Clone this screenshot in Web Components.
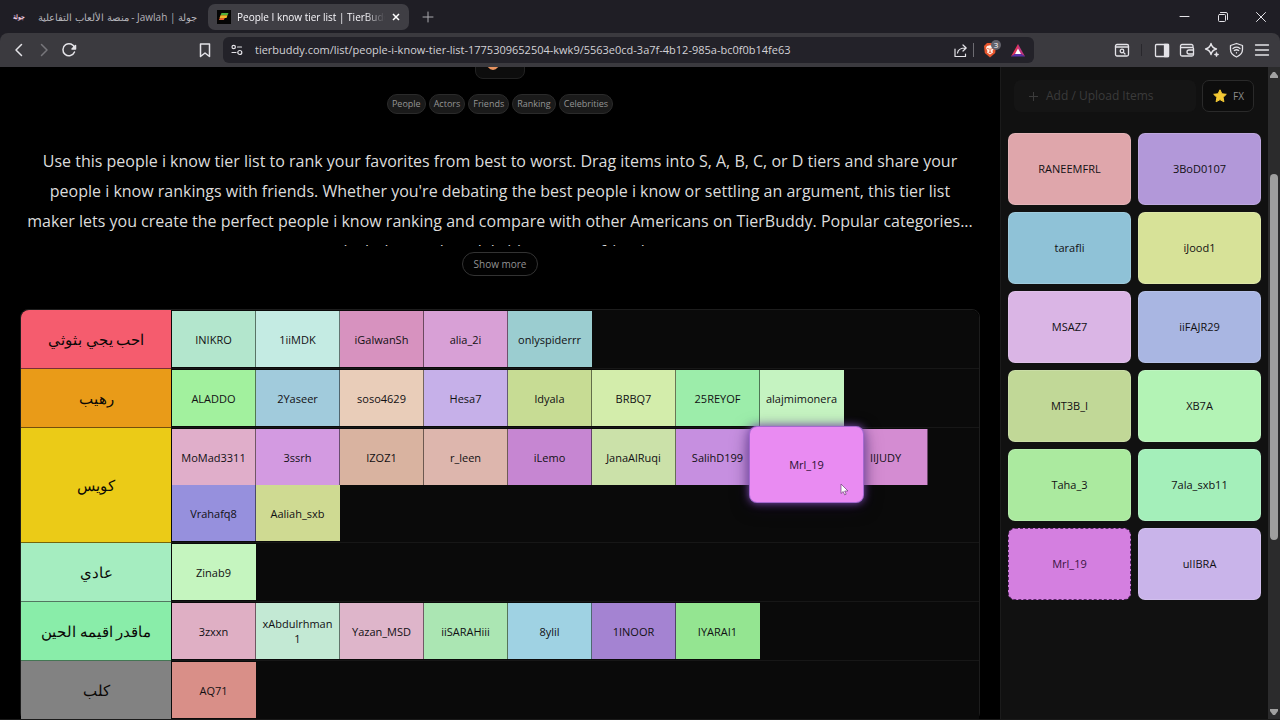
<!DOCTYPE html>
<html lang="en">
<head>
<meta charset="utf-8">
<title>People I know tier list | TierBuddy</title>
<style>
  html, body { margin: 0; height: 100%; background: #000; }
  body { font-family: "Open Sans", "Noto Sans", sans-serif; color: #ddd; overflow: hidden; }
</style>
</head>
<body>
<browser-shell>
  <browser-tab slot="tabs" rtl><span slot="icon" lang="ar">جولة</span>جولة | Jawlah - منصة الألعاب التفاعلية</browser-tab>
  <browser-tab slot="tabs" active>
    <svg slot="icon" width="14" height="14" viewBox="0 0 14 14"><rect width="14" height="14" fill="#050505"/><path d="M4.500 3h7l-1 2.200h-7z" fill="#4fae3c"/><path d="M3.500 5.200h7l-1 2.700h-7z" fill="#f0b429"/><path d="M2.800 7.900h5l-1 2.200h-5z" fill="#e05a2b"/></svg>
    People I know tier list | TierBuddy
  </browser-tab>
  <tier-page slot="page">
    <tag-chip slot="tags">People</tag-chip><tag-chip slot="tags">Actors</tag-chip><tag-chip slot="tags">Friends</tag-chip><tag-chip slot="tags">Ranking</tag-chip><tag-chip slot="tags">Celebrities</tag-chip>
    <tier-row color="#f55c6e"><span slot="label">احب يجي بثوثي</span>
      <tier-item color="#b3e6cd">INIKRO</tier-item><tier-item color="#c4ebe3">1iiMDK</tier-item><tier-item color="#d792bf">iGalwanSh</tier-item><tier-item color="#d8a0d6">alia_2i</tier-item><tier-item color="#9bcdd0">onlyspiderrr</tier-item>
    </tier-row>
    <tier-row color="#e99b18"><span slot="label">رهيب</span>
      <tier-item color="#a2f19e">ALADDO</tier-item><tier-item color="#a1cbdc">2Yaseer</tier-item><tier-item color="#e9cdb9">soso4629</tier-item><tier-item color="#c6b0e9">Hesa7</tier-item><tier-item color="#c7dc94">ldyala</tier-item><tier-item color="#d3edab">BRBQ7</tier-item><tier-item color="#9cedaa">25REYOF</tier-item><tier-item color="#c5f3c1">alajmimonera</tier-item>
    </tier-row>
    <tier-row color="#ebcb17"><span slot="label">كويس</span>
      <tier-item color="#e0aeca">MoMad3311</tier-item><tier-item color="#d39ae1">3ssrh</tier-item><tier-item color="#d9b3a0">IZOZ1</tier-item><tier-item color="#ddb6ad">r_leen</tier-item><tier-item color="#c686d2">iLemo</tier-item><tier-item color="#cbe1a9">JanaAlRuqi</tier-item><tier-item color="#c68fe0">SalihD199</tier-item><tier-item color="transparent"><drag-card slot="overlay">Mrl_19</drag-card></tier-item><tier-item color="#d48cd2">IIJUDY</tier-item><tier-item color="#9690dd">Vrahafq8</tier-item><tier-item color="#cfda92">Aaliah_sxb</tier-item>
    </tier-row>
    <tier-row color="#a5edc0"><span slot="label">عادي</span>
      <tier-item color="#c5f5bf">Zinab9</tier-item>
    </tier-row>
    <tier-row color="#89eda9"><span slot="label">ماقدر اقيمه الحين</span>
      <tier-item color="#dfafc4">3zxxn</tier-item><tier-item color="#c3e9d4">xAbdulrhman1</tier-item><tier-item color="#deb5ca">Yazan_MSD</tier-item><tier-item color="#abe6b3">iiSARAHiii</tier-item><tier-item color="#9fd2e3">8ylil</tier-item><tier-item color="#a483d2">1INOOR</tier-item><tier-item color="#94e591">IYARAI1</tier-item>
    </tier-row>
    <tier-row color="#828282"><span slot="label">كلب</span>
      <tier-item color="#d98f88">AQ71</tier-item>
    </tier-row>
  </tier-page>
  <item-pool slot="side">
    <pool-item color="#dfa6ab">RANEEMFRL</pool-item><pool-item color="#b298d9">3BoD0107</pool-item>
    <pool-item color="#8fc2d7">tarafli</pool-item><pool-item color="#d7e298">iJood1</pool-item>
    <pool-item color="#dab5e5">MSAZ7</pool-item><pool-item color="#a9b6e2">iiFAJR29</pool-item>
    <pool-item color="#c1d897">MT3B_I</pool-item><pool-item color="#b3f3b5">XB7A</pool-item>
    <pool-item color="#abea9f">Taha_3</pool-item><pool-item color="#a4efba">7ala_sxb11</pool-item>
    <pool-item color="#d47fe0" dragging>Mrl_19</pool-item><pool-item color="#c9b4ea">uIIBRA</pool-item>
  </item-pool>
</browser-shell>

<script>
const define = (name, html, setup) => {
  const template = document.createElement('template');
  template.innerHTML = html;
  customElements.define(name, class extends HTMLElement {
    constructor() {
      super();
      this.attachShadow({ mode: 'open' }).append(template.content.cloneNode(true));
    }
    connectedCallback() { if (setup) setup(this); }
  });
};
const useColor = el => el.style.setProperty('--tone', el.getAttribute('color'));

define('browser-shell', `
<style>
  :host { display: grid; grid-template-rows: 33px 34px minmax(0, 1fr); height: 100vh; background: #1f1e25; }
  header { display: flex; align-items: center; }
  button { display: grid; place-items: center; border: 0; padding: 0; background: none; color: #e4e3e8; width: 25px; height: 24px; }
  svg { display: block; fill: none; stroke: currentColor; stroke-width: 1.500; stroke-linecap: round; stroke-linejoin: round; overflow: visible; }
  .new { margin-left: 6px; color: #aaa9af; }
  .window { margin-left: auto; display: flex; gap: 13px; padding-right: 7px; }
  .window svg, .new svg { stroke-width: 1; }
  nav { display: flex; align-items: center; padding: 0 6px; background: #3b3a3f; border-radius: 8px 8px 0 0; }
  .dim { color: #77767b; }
  .mark { margin-left: 111px; }
  .address { flex: 1; display: flex; align-items: center; min-width: 0; height: 26px; margin-left: 6px; padding: 0 6px 0 4px; border-radius: 6px; background: #232229; box-sizing: border-box; }
  .address button { width: 20px; }
  input { flex: 1; min-width: 0; border: 0; outline: 0; background: none; margin: 0 0 0 8px; padding: 0; color: #d2d1d6; font: 11px/20px "Open Sans", sans-serif; }
  .rule { width: 1px; height: 14px; background: #6d6c72; margin: 0 6px 0 3px; }
  .address .bat { margin-left: 8px; }
  .shield { position: relative; }
  .count { position: absolute; left: 11px; top: 2px; width: 10px; height: 10px; border-radius: 5px; background: #62626b; color: #fff; font: 8px/10px "Open Sans", sans-serif; text-align: center; }
  .tools { display: flex; align-items: center; margin-left: 75px; }
  .tools i { width: 1px; height: 12px; margin: 0 7px; background: #28272c; }
  .body { display: grid; grid-template-columns: minmax(0, 1fr) 268px 12px; min-height: 0; background: #000; border-bottom: 1px solid #1a1a1a; }
  .scroll { display: flex; flex-direction: column; align-items: center; background: #2b2b2c; padding: 5px 0 4px; }
  .scroll svg { fill: #a1a1a1; stroke: none; flex: none; }
  .thumb { flex: 364; width: 8px; border-radius: 4px; background: #9e9e9e; }
  .before { flex: 95; } .after { flex: 168; }
</style>
<header>
  <slot name="tabs"></slot>
  <button class="new" aria-label="New tab"><svg width="10" height="10" viewBox="0 0 10 10"><path d="M5 0v10M0 5h10"/></svg></button>
  <div class="window">
    <button aria-label="Minimize"><svg width="10" height="10" viewBox="0 0 10 10"><path d="M0 4.500h9"/></svg></button>
    <button aria-label="Restore"><svg width="10" height="10" viewBox="0 0 10 10"><rect x=".5" y="2.500" width="7" height="7" rx="1"/><path d="M2.500 .5h5.500a1.500 1.500 0 0 1 1.500 1.500v5.500"/></svg></button>
    <button aria-label="Close"><svg width="10" height="10" viewBox="0 0 10 10"><path d="M.5 .5l9 9M9.500 .5l-9 9"/></svg></button>
  </div>
</header>
<nav>
  <button aria-label="Back"><svg width="14" height="14" viewBox="0 0 14 14"><path d="M9.500 1.500L4 7l5.500 5.500"/></svg></button>
  <button class="dim" aria-label="Forward"><svg width="14" height="14" viewBox="0 0 14 14"><path d="M4.500 1.500L10 7l-5.500 5.500"/></svg></button>
  <button aria-label="Reload"><svg width="14" height="14" viewBox="0 0 14 14"><path d="M12.500 9A6 6 0 1 1 12.700 5"/><path d="M13.500 2.500v3.500H10z" fill="currentColor"/></svg></button>
  <button class="mark" aria-label="Bookmark"><svg width="14" height="14" viewBox="0 0 14 14"><path d="M2.500 1h9v12.500L7 10l-4.500 3.500z"/></svg></button>
  <div class="address">
    <button aria-label="Site settings"><svg width="12" height="12" viewBox="0 0 12 12"><g stroke-width="1.200"><circle cx="2.700" cy="3" r="1.700"/><path d="M6.500 3h4M1 8.500h4"/><circle cx="8.800" cy="8.500" r="2"/></g></svg></button>
    <input aria-label="Address" value="tierbuddy.com/list/people-i-know-tier-list-1775309652504-kwk9/5563e0cd-3a7f-4b12-985a-bc0f0b14fe63">
    <button aria-label="Share"><svg width="13" height="13" viewBox="0 0 13 13"><g stroke-width="1.200"><path d="M1 5v7.500h10.500V10"/><path d="M3.500 9c.5-3.500 3-5 8-5M9 1l3.200 3L9 7"/></g></svg></button>
    <span class="rule"></span>
    <button class="shield" aria-label="Brave Shields"><svg width="14" height="16" viewBox="0 0 14 16"><path d="M4 1h6l3 3-.8 7L7 15.500 1.800 11 1 4z" fill="#e8552c" stroke="none"/><path d="M4 4l3-.7L10 4l1 2-1.500 3 .5 1.500-3 2-3-2L4.500 9 3 6z" fill="#fff0e8" stroke="none"/><path d="M4.500 6.500l1.500.5M9.500 6.500L8 7M7 7v2.500L6 10.500h2L7 9.500" stroke="#e8552c" stroke-width=".8"/></svg><span class="count">3</span></button>
    <button class="bat" aria-label="Brave Rewards"><svg width="14" height="13" viewBox="0 0 14 13"><g stroke="none"><path d="M7 0L0 12.500l7-4z" fill="#e0355c"/><path d="M7 0l7 12.500-7-4z" fill="#c03580"/><path d="M0 12.500h14L7 8z" fill="#5a32a8"/><path d="M7 4.500L10 10H4z" fill="#fff"/></g></svg></button>
  </div>
  <div class="tools">
    <button aria-label="Search tabs"><svg width="14" height="12" viewBox="0 0 14 12"><g stroke-width="1.300"><rect x=".5" y=".5" width="13" height="11.500" rx="1.500"/><path d="M.5 3h13"/><circle cx="7" cy="7" r="1.800"/><path d="M8.400 8.400l1.600 1.600"/></g></svg></button>
    <i></i>
    <button aria-label="Sidebar"><svg width="14" height="13" viewBox="0 0 14 13"><g stroke-width="1.300"><rect x=".5" y=".5" width="13" height="12" rx="1"/><path d="M9.500 .5h4v12h-4z" fill="currentColor"/></g></svg></button>
    <button aria-label="Wallet"><svg width="14" height="13" viewBox="0 0 14 13"><g stroke-width="1.300"><path d="M13 3.500V2a1.500 1.500 0 0 0-1.500-1.500H2A1.500 1.500 0 0 0 .5 2v8.500A1.500 1.500 0 0 0 2 12h10a1.500 1.500 0 0 0 1.500-1.500v-6A1 1 0 0 0 12.500 3.500H.5"/><path d="M13.500 6H9a2 2 0 0 0 0 4h4.500"/></g></svg></button>
    <button aria-label="Leo AI"><svg width="14" height="14" viewBox="0 0 14 14"><g stroke-width="1.300"><path d="M6 .5c.8 3.500 2 4.700 5.500 5.500C8 6.800 6.800 8 6 11.500 5.200 8 4 6.800.5 6 4 5.200 5.200 4 6 .5z"/><path d="M11.500 9l.7 1.800 1.800.7-1.800.7-.7 1.800-.7-1.800-1.800-.7 1.800-.7z" fill="currentColor" stroke-width=".5"/></g></svg></button>
    <button aria-label="VPN"><svg width="13" height="14" viewBox="0 0 13 14"><g stroke-width="1.300"><path d="M6.500 .5l6 2v4c0 3.500-2.500 6-6 7.500-3.500-1.500-6-4-6-7.500v-4z"/><path d="M3 5.500c2.300-1.700 4.700-1.700 7 0M4.300 7.500c1.500-1 2.900-1 4.400 0M6.500 9.700v.2"/></g></svg></button>
    <button aria-label="Menu"><svg width="14" height="12" viewBox="0 0 14 12"><path d="M.5 1h13M.5 6h13M.5 11h13" stroke-width="1.300"/></svg></button>
  </div>
</nav>
<div class="body">
  <slot name="page"></slot>
  <slot name="side"></slot>
  <div class="scroll">
    <svg width="8" height="6" viewBox="0 0 8 6"><path d="M3 0h2l3 4v2H0V4z"/></svg>
    <span class="before"></span><span class="thumb"></span><span class="after"></span>
    <svg width="8" height="6" viewBox="0 0 8 6"><path d="M0 0h8v2L5 6H3L0 2z"/></svg>
  </div>
</div>`);

define('browser-tab', `
<style>
  :host { display: flex; align-items: center; box-sizing: border-box; width: 208px; height: 26px; padding: 0 11px 0 10px; font: 10px/20px "Open Sans", sans-serif; color: #b5b4ba; }
  :host([active]) { width: 201px; padding: 0 6px 0 9px; background: #3f3e44; border-radius: 7px; color: #f8f7fb; }
  .icon { display: grid; place-items: center; flex: none; width: 14px; overflow: hidden; color: #f3cfe4; font: bold 6px/12px "Open Sans", sans-serif; }
  :host([rtl]) .icon { width: 18px; }
  .title { flex: 1; min-width: 0; margin-left: 6px; overflow: hidden; white-space: nowrap; -webkit-mask: linear-gradient(to left, transparent, #000 20px); }
  :host([rtl]) .title { direction: rtl; margin-left: 10px; -webkit-mask: none; }
  button { display: none; place-items: center; border: 0; padding: 0; width: 14px; height: 14px; margin-left: 4px; background: none; color: #fff; }
  :host([active]) button { display: grid; }
</style>
<span class="icon"><slot name="icon"></slot></span>
<span class="title"><slot></slot></span>
<button aria-label="Close tab"><svg width="8" height="8" viewBox="0 0 8 8" stroke="currentColor" stroke-width="1.500"><path d="M1 1l6 6M7 1L1 7"/></svg></button>`);

define('tag-chip', `
<style>
  :host { display: block; }
  a { display: block; box-sizing: border-box; height: 20px; padding: 0 4px; border: 1px solid #2b2b2b; border-radius: 10px; background: #1a1a1a; color: #949494; font-size: 9px; line-height: 18px; text-decoration: none; }
</style>
<a href="#"><slot></slot></a>`);

define('tier-page', `
<style>
  :host { display: flex; flex-direction: column; align-items: center; min-width: 0; padding: 0 20px; overflow: hidden; }
  button { flex: none; box-sizing: border-box; font: inherit; }
  .react { display: flex; width: 50px; height: 40px; margin-top: -28px; padding: 0 10px; border: 1px solid #222; border-radius: 8px; background: #0d0d0d; align-items: center; }
  .tags { display: flex; flex: none; gap: 3px; margin-top: 15px; }
  p { flex: none; margin: 32px 0 0; height: 100px; overflow: hidden; font-size: 16px; line-height: 30px; text-align: center; color: #dcdcdc; white-space: nowrap; }
  .more { margin-top: 6px; height: 24px; padding: 0 10px; border: 1px solid #333; border-radius: 12px; background: #020202; color: #929292; font-size: 10px; width: 76px; }
  .board { flex: none; align-self: stretch; margin-top: 33px; border: 1px solid #1d1d1d; border-radius: 8px; }
</style>
<button class="react" aria-label="Reaction"><svg width="14" height="22" viewBox="0 0 14 22"><ellipse cx="7" cy="13" rx="7" ry="9" fill="#e8935f"/></svg></button>
<div class="tags"><slot name="tags"></slot></div>
<p>Use this people i know tier list to rank your favorites from best to worst. Drag items into S, A, B, C, or D tiers and share your<br>people i know rankings with friends. Whether you're debating the best people i know or settling an argument, this tier list<br>maker lets you create the perfect people i know ranking and compare with other Americans on TierBuddy. Popular categories...<br>include people, celebrities, actors, friends.</p>
<button class="more">Show more</button>
<div class="board"><slot></slot></div>`);

define('tier-row', `
<style>
  :host { display: grid; grid-template-columns: 150px minmax(0, 1fr); background: #0a0a0a; }
  :host(:first-of-type) { border-radius: 8px 8px 0 0; }
  :host(:first-of-type) .label { border-top-left-radius: 8px; }
  .label { display: grid; place-items: center; background: var(--tone); border-bottom: 1px solid rgba(0, 0, 0, .5); color: #0a0806; font-size: 15px; line-height: 24px; font-weight: 500; direction: rtl; }
  .items { display: flex; flex-wrap: wrap; padding: 1px; border-bottom: 1px solid #171717; }
</style>
<div class="label"><slot name="label"></slot></div>
<div class="items"><slot></slot></div>`, useColor);

define('tier-item', `
<style>
  :host { position: relative; display: grid; place-items: center; box-sizing: border-box; width: 84px; height: 56px; padding: 0 5px; background: var(--tone); border-right: 1px solid rgba(0, 0, 0, .5); color: #111013; font-size: 11px; font-weight: 500; line-height: 15px; text-align: center; }
  :host(:last-of-type) { border-right-color: transparent; }
  span { max-width: 100%; overflow-wrap: anywhere; }
</style>
<span><slot></slot></span><slot name="overlay"></slot>`, useColor);

define('drag-card', `
<style>
  :host { position: absolute; z-index: 2; left: -10px; top: -2px; display: grid; place-items: center; width: 113px; height: 75px; border-radius: 7px; background: #e98bf2; box-shadow: 0 0 0 1px #a468cf, 0 0 8px 1px #7e50b4, 0 4px 18px rgba(20, 5, 40, .6); color: #2a1030; }
  svg { position: absolute; left: 90px; top: 56px; }
</style>
<slot></slot>
<svg width="9" height="13" viewBox="0 0 9 13"><path d="M1 1v9.500l2.200-2 1.500 3.400 1.500-.7-1.500-3.200H8z" fill="#fff" stroke="#6c3f75" stroke-width=".7"/></svg>`);

define('item-pool', `
<style>
  :host { display: block; min-width: 0; overflow: hidden; padding: 13px 7px 0; background: #111; border-left: 1px solid #1b1b1b; }
  header { display: flex; gap: 6px; padding: 0 7px 0 6px; margin-bottom: 21px; }
  button { display: flex; align-items: center; height: 32px; box-sizing: border-box; border: 1px solid transparent; border-radius: 7px; font: 12px/20px "Open Sans", sans-serif; }
  .add { flex: 1; gap: 8px; padding: 0 14px; background: #151515; color: #3b3b3b; }
  .fx { gap: 6px; width: 52px; padding: 0 8px 0 10px; background: #0d0d0d; border-color: #2a2a2a; color: #8c8c8c; font-size: 10px; }
  svg { flex: none; }
  .grid { display: grid; grid-template-columns: 1fr 1fr; gap: 7px; }
</style>
<header>
  <button class="add"><svg width="9" height="9" viewBox="0 0 9 9" stroke="currentColor"><path d="M4.500 0v9M0 4.500h9"/></svg>Add / Upload Items</button>
  <button class="fx"><svg width="14" height="14" viewBox="0 0 14 14"><path d="M7 .8l1.900 4 4.400.5-3.200 3 .8 4.500L7 10.600l-3.900 2.200.8-4.500-3.200-3 4.400-.5z" fill="#f3c934" stroke="#f3c934" stroke-linejoin="round"/></svg>FX</button>
</header>
<div class="grid"><slot></slot></div>`);

define('pool-item', `
<style>
  :host { display: grid; place-items: center; box-sizing: border-box; height: 72px; border: 1px solid rgba(255, 255, 255, .15); border-radius: 7px; background: var(--tone); color: #111013; font-size: 11px; font-weight: 500; line-height: 16px; }
  :host([dragging]) { border: 1px dashed #5a2668; color: #3a1442; }
</style>
<slot></slot>`, useColor);
</script>
</body>
</html>
